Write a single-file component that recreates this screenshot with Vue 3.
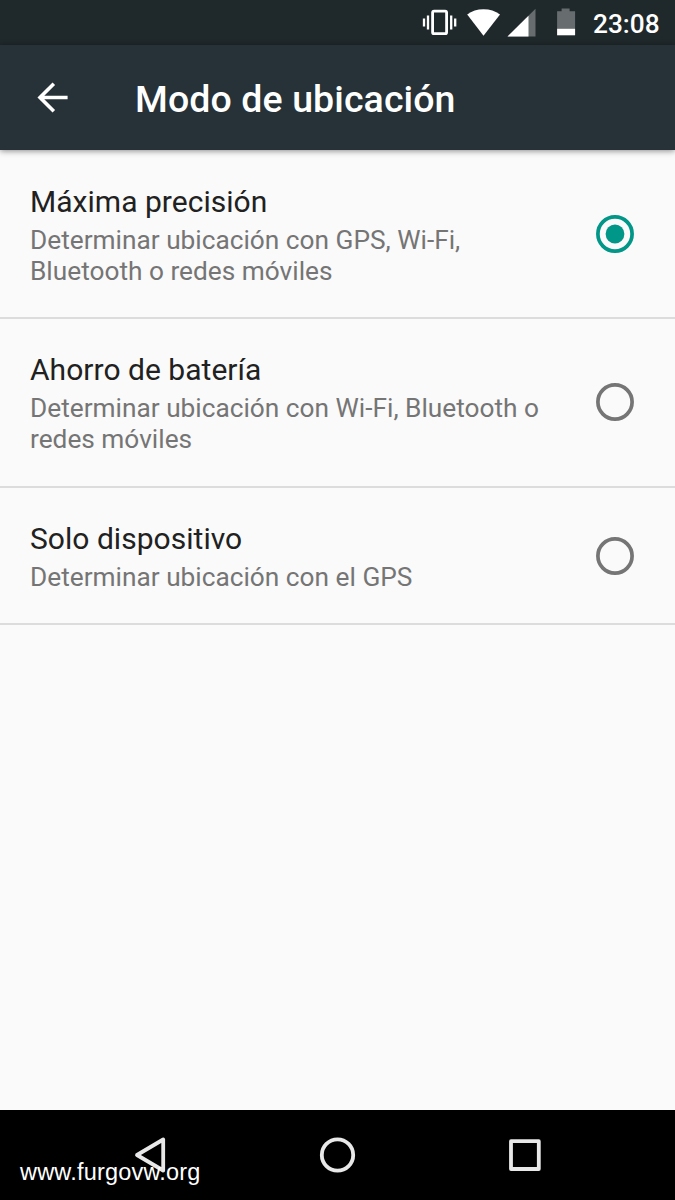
<script setup>
const options = [
  { title: 'Máxima precisión', lines: ['Determinar ubicación con GPS, Wi-Fi,', 'Bluetooth o redes móviles'], selected: true },
  { title: 'Ahorro de batería', lines: ['Determinar ubicación con Wi-Fi, Bluetooth o', 'redes móviles'], selected: false },
  { title: 'Solo dispositivo', lines: ['Determinar ubicación con el GPS'], selected: false },
]
</script>

<template>
  <div class="screen">
    <header class="status">
      <svg class="status-icons" width="160" height="45" viewBox="0 0 160 45">
        <g fill="none" stroke="#fff">
          <rect x="12.6" y="11.1" width="14" height="22.6" rx="1.5" stroke-width="2.8" />
          <path stroke-width="2.3" d="M4 18.5v8M8 15.5v14M31.2 15.5v14M35.2 18.5v8" />
        </g>
        <path fill="#fff" d="M63.5 35.8L47.2 14.6Q54 9.3 63.5 9.3T80 14.6Z" />
        <path fill="#676d6f" d="M115.5 8.8V36.4H87.5Z" />
        <path fill="#fff" d="M108.5 15.8V36.4H87.5Z" />
        <path fill="#676d6f" d="M141.6 8.6h8v2.6h5.5V29h-18V11.2h4.5Z" />
        <path fill="#fff" d="M137.1 28.8h18v6.5h-18Z" />
      </svg>
      <span class="clock">23:08</span>
    </header>
    <div class="toolbar">
      <svg class="back" width="34" height="34" viewBox="0 0 34 34" fill="none" stroke="#fff" stroke-width="3.6">
        <path d="M32.6 16.5H5M18.8 2.7L5 16.5L18.8 30.3" />
      </svg>
      <h1>Modo de ubicación</h1>
    </div>
    <main>
      <section v-for="o in options" :key="o.title" class="row">
        <div class="text">
          <h2>{{ o.title }}</h2>
          <p v-for="l in o.lines" :key="l">{{ l }}</p>
        </div>
        <svg class="radio" :class="{ on: o.selected }" width="38" height="38" viewBox="0 0 38 38">
          <circle cx="19" cy="19" r="17.1" fill="none" stroke="currentColor" stroke-width="3.7" />
          <circle v-if="o.selected" cx="19" cy="19" r="9.4" fill="currentColor" />
        </svg>
      </section>
    </main>
    <nav class="navbar">
      <svg width="675" height="90" viewBox="0 0 675 90" fill="none" stroke="#e8e8e8" stroke-linejoin="round" stroke-width="3.8">
        <path d="M163.2 29.5V60.5L137 45Z" />
        <circle cx="337.5" cy="45" r="15.7" />
        <rect x="511" y="31.2" width="27.8" height="27.8" />
      </svg>
      <span class="watermark">www.furgovw.org</span>
    </nav>
  </div>
</template>

<style>
body { margin: 0; }
</style>

<style scoped>
.screen {
  width: 675px;
  height: 1200px;
  display: flex;
  flex-direction: column;
  background: #fafafa;
  font-family: Roboto, "Liberation Sans", sans-serif;
  overflow: hidden;
}
.status {
  height: 45px;
  flex: none;
  display: flex;
  justify-content: flex-end;
  align-items: center;
  background: #1f282b;
  color: #fff;
  padding-right: 15px;
}
.status-icons { flex: none; margin-right: 13px; }
.clock {
  width: 67px;
  font-size: 26.25px;
  font-weight: 500;
  line-height: 45px;
  padding-top: 3px;
  white-space: nowrap;
}
.toolbar {
  height: 105px;
  flex: none;
  display: flex;
  align-items: center;
  background: #263238;
  color: #fff;
  padding-left: 35px;
  box-sizing: border-box;
  box-shadow: 0 1px 6px rgba(0, 0, 0, 0.45);
  z-index: 1;
}
.back { margin-right: 66px; }
h1 {
  margin: 3px 0 0;
  font-size: 37.5px;
  font-weight: 500;
  letter-spacing: 0.1px;
  line-height: 44px;
  white-space: nowrap;
}
main { flex: 1; }
.row {
  display: flex;
  align-items: center;
  justify-content: space-between;
  box-sizing: border-box;
  padding: 33.5px 41px 30.25px 30px;
  border-bottom: 2px solid #dcdcdc;
}
h2 {
  margin: 0 0 6px;
  font-size: 30px;
  font-weight: 400;
  letter-spacing: 0.03px;
  line-height: 35px;
  color: #212121;
}
p {
  margin: 0;
  font-size: 26.25px;
  line-height: 31px;
  color: #757575;
  white-space: nowrap;
}
.radio { color: #757575; flex: none; margin-bottom: 3px; }
.radio.on { color: #009688; }
.navbar {
  position: relative;
  flex: none;
  height: 90px;
  background: #000;
}
.navbar svg { display: block; }
.watermark {
  position: absolute;
  left: 20px;
  top: 48px;
  font-family: "Liberation Sans", sans-serif;
  font-size: 23.5px;
  letter-spacing: 0.2px;
  line-height: 28px;
  color: #fff;
}
</style>
